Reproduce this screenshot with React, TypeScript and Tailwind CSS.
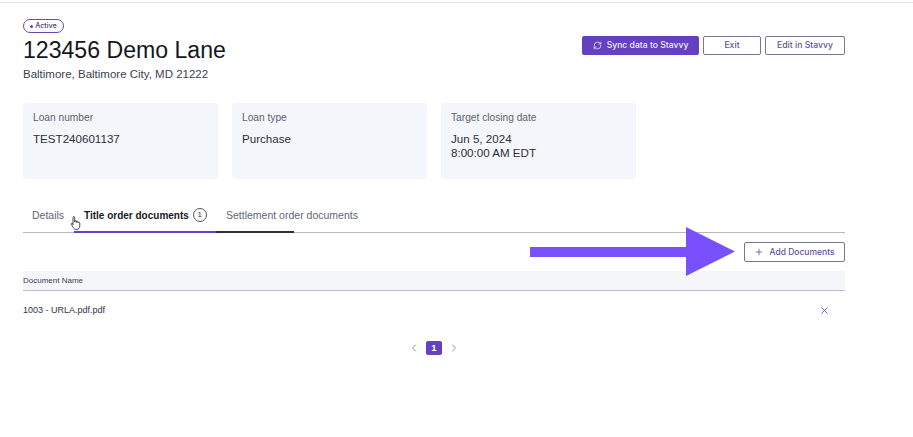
import React from 'react';
import { ChevronLeft, ChevronRight, Plus, RefreshCw, X } from 'lucide-react';

const font = { fontFamily: '"Liberation Sans", Arial, sans-serif' };
const btnFont = { fontFamily: 'Inter, "Liberation Sans", sans-serif' };

const InfoCard: React.FC<{ label: string; lines: string[] }> = ({ label, lines }) => (
  <div className="h-[76px] w-[195px] rounded-[3px] bg-[#f4f6fb] px-[10px] pt-[8px]">
    <div className="text-[10.2px] leading-[13px] text-[#5b6472]">{label}</div>
    <div className="mt-[8px] text-[11.6px] leading-[14px] text-[#2b303a]">
      {lines.map(l => <div key={l}>{l}</div>)}
    </div>
  </div>
);

const App: React.FC = () => {
  return (
    <div className="relative h-[437px] w-[913px] overflow-hidden bg-white" style={font}>
      <div className="h-[3px] border-b border-[#dde3ea]" />
      <div className="px-[23px] pr-[68px] pt-[16px]">
        {/* header */}
        <div className="flex items-start justify-between">
          <div>
            <div className="flex h-[14px] w-[41px] items-center justify-center gap-[2px] rounded-full border border-[#6b48b8] text-[7.2px] font-medium text-[#4b3a80]" style={btnFont}>
              <span className="h-[3px] w-[3px] rounded-full bg-[#6641c0]" />
              Active
            </div>
            <h1 className="mt-[3px] text-[23.1px] leading-[28px] text-[#15171c]">123456 Demo Lane</h1>
            <div className="mt-[3px] text-[11.5px] leading-[14px] text-[#3c4150]">Baltimore, Baltimore City, MD 21222</div>
          </div>
          <div className="mt-[17px] flex gap-[4px]" style={btnFont}>
            <button className="flex h-[19px] w-[117px] items-center justify-center gap-[5px] rounded-[2px] bg-[#6541c1] text-[8.6px] font-medium text-[#f0ecfa]">
              <RefreshCw size={9} strokeWidth={2} />
              Sync data to Stavvy
            </button>
            <button className="h-[19px] w-[58px] rounded-[2px] border border-[#7a7590] text-[8.7px] font-medium text-[#6550a0]">Exit</button>
            <button className="h-[19px] w-[80px] rounded-[2px] border border-[#7a7590] text-[8.7px] font-medium text-[#6550a0]">Edit in Stavvy</button>
          </div>
        </div>

        {/* cards */}
        <div className="mt-[22px] flex gap-[14px]">
          <InfoCard label="Loan number" lines={['TEST240601137']} />
          <InfoCard label="Loan type" lines={['Purchase']} />
          <InfoCard label="Target closing date" lines={['Jun 5, 2024', '8:00:00 AM EDT']} />
        </div>

        {/* tabs */}
        <div className="mt-[21px] flex h-[33px] border-b border-[#b9b9bd] text-[10.5px]">
          <div className="w-[51px] pl-[9px] pt-[8px] text-[#5f6676]">Details</div>
          <div className="-mb-[1px] flex h-[33px] w-[142px] items-start gap-[4px] border-b-2 border-[#6541c1] pl-[10px] pt-[8px]">
            <span className="text-[10px] font-bold text-[#17191f]">Title order documents</span>
            <span className="flex h-[14px] w-[14px] items-center justify-center rounded-full border border-[#50535c] text-[8px] text-[#30333a]">1</span>
          </div>
          <div className="-mb-[1px] h-[33px] w-[78px] whitespace-nowrap border-b-2 border-[#33323c] pl-[10px] pt-[8px] text-[#5f6676]">Settlement order documents</div>
        </div>

        {/* add documents */}
        <div className="mt-[9px] flex justify-end">
          <button className="flex h-[20px] w-[101px] items-center justify-center gap-[5px] rounded-[2px] border border-[#7a7590] text-[8.5px] font-medium text-[#6550a0]" style={btnFont}>
            <Plus size={10} strokeWidth={1.75} className="text-[#5a3fb0]" />
            Add Documents
          </button>
        </div>

        {/* table */}
        <div className="mt-[9px] flex h-[20px] items-center border-b border-[#b5c1d2] bg-[#f5f6fa] text-[8px] text-[#3c4150]">Document Name</div>
        <div className="flex h-[39px] items-center justify-between pr-[15px] text-[9px] text-[#2f3644]">
          <span>1003 - URLA.pdf.pdf</span>
          <X size={11} strokeWidth={1.75} className="text-[#5a3fb0]" />
        </div>

        {/* pagination */}
        <div className="mt-[11px] flex items-center justify-center gap-[6px]">
          <ChevronLeft size={12} strokeWidth={1.75} className="text-[#7c86a0]" />
          <span className="flex h-[14px] w-[16px] items-center justify-center rounded-[2px] bg-[#6541c1] text-[9.5px] font-bold text-white">1</span>
          <ChevronRight size={12} strokeWidth={1.75} className="text-[#7c86a0]" />
        </div>
      </div>

      {/* arrow annotation */}
      <svg className="absolute left-[530px] top-[227px]" width="206" height="50" viewBox="0 0 206 50">
        <path d="M0 20H156V0L205 24.5L156 49V30H0Z" fill="#7950fb" />
      </svg>

      {/* hand cursor */}
      <svg className="absolute left-[70px] top-[215px]" width="12" height="16" viewBox="0 0 14 18">
        <path d="M3.5 11V2.5a1 1 0 0 1 2 0V8l.2-1.5a1 1 0 0 1 1.8.4V8.4l.2-1a1 1 0 0 1 1.7.4v1l.2-.4a1 1 0 0 1 1.8.5v3.6c0 2.2-1.2 4-3.4 4H7c-1.400 0-2.300-.8-3-2L1.500 10.700c-.6-1 .7-1.900 1.500-1z" fill="#fff" stroke="#2b2b30" strokeWidth="1" strokeLinejoin="round" />
      </svg>
    </div>
  );
};

export default App;
